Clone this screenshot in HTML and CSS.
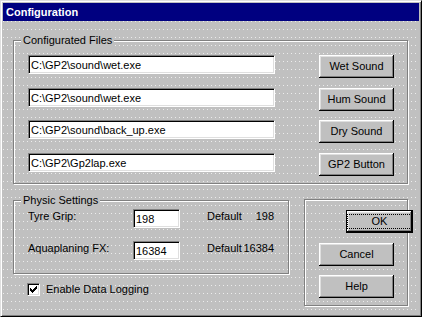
FILE: index.html
```html
<!DOCTYPE html>
<html lang="en">
<head>
  <meta charset="UTF-8">
  <title>Configuration</title>
  <link rel="stylesheet" href="styles.css">
</head>
<body>

  <div class="window">
    <div class="titlebar">Configuration</div>

    <div class="client">
      <div class="group files">
        <span class="group-label">Configurated Files</span>
        <div class="file-row">
          <div class="edit path">C:\GP2\sound\wet.exe</div>
          <button class="btn">Wet Sound</button>
        </div>
        <div class="file-row">
          <div class="edit path">C:\GP2\sound\wet.exe</div>
          <button class="btn">Hum Sound</button>
        </div>
        <div class="file-row">
          <div class="edit path">C:\GP2\sound\back_up.exe</div>
          <button class="btn">Dry Sound</button>
        </div>
        <div class="file-row">
          <div class="edit path">C:\GP2\Gp2lap.exe</div>
          <button class="btn">GP2 Button</button>
        </div>
      </div>

      <div class="lower">
        <div class="left-col">
          <div class="group physics">
            <span class="group-label">Physic Settings</span>
            <div class="phys-row">
              <span class="phys-label">Tyre Grip:</span>
              <div class="edit num">198</div>
              <span class="default"><span>Default</span><span>198</span></span>
            </div>
            <div class="phys-row">
              <span class="phys-label">Aquaplaning FX:</span>
              <div class="edit num">16384</div>
              <span class="default"><span>Default</span><span>16384</span></span>
            </div>
          </div>

          <div class="check">
            <span class="checkbox">
              <svg width="7" height="7" viewBox="0 0 7 7" shape-rendering="crispEdges">
                <path d="M6 0h1v1h-1z M5 1h2v1h-2z M0 2h1v1h-1z M4 2h3v1h-3z M0 3h2v1h-2z M3 3h3v1h-3z M0 4h5v1h-5z M1 5h3v1h-3z M2 6h1v1h-1z" fill="#000"/>
              </svg>
            </span>
            <span>Enable Data Logging</span>
          </div>
        </div>

        <div class="group actions">
          <button class="btn default"><span class="focus">OK</span></button>
          <button class="btn">Cancel</button>
          <button class="btn">Help</button>
        </div>
      </div>
    </div>
  </div>

</body>
</html>
```

FILE: styles.css
```css
* {
  box-sizing: border-box;
  margin: 0;
  padding: 0;
}

body {
  font-family: "Liberation Sans", Arial, sans-serif;
  font-size: 11px;
  line-height: 13px;
  color: #000;
  background: #c0c0c0;
}

.window {
  width: 422px;
  height: 317px;
  display: flex;
  flex-direction: column;
  padding: 2px;
  background: #c0c0c0;
  border: 1px solid;
  border-color: #dfdfdf #000 #000 #dfdfdf;
  box-shadow: inset 1px 1px #fff, inset -1px -1px #808080;
}

.titlebar {
  height: 18px;
  line-height: 18px;
  padding-left: 3px;
  background: #000080;
  color: #fff;
  font-weight: bold;
}

/* design-time grid dots */
.client {
  flex: 1;
  background:
    linear-gradient(90deg, transparent 1px, #c0c0c0 1px) 0 0 / 4px 8px,
    linear-gradient(transparent 1px, #c0c0c0 1px) 0 0 / 4px 8px,
    #ececec;
}

.group {
  position: relative;
  border: 1px solid #808080;
  box-shadow: inset 1px 1px #fff, 1px 1px #fff;
}

.group-label {
  position: absolute;
  top: -7px;
  left: 7px;
  padding: 0 2px;
  background: #c0c0c0;
  white-space: nowrap;
}

.files {
  width: 395px;
  height: 144px;
  margin: 19px 0 0 10px;
  padding: 14px 0 0 14px;
}

.file-row {
  display: flex;
  align-items: flex-start;
  gap: 44px;
  height: 32.67px;
}

.edit {
  height: 19px;
  padding: 3px 2px 0;
  background: #fff;
  border: 1px solid;
  border-color: #808080 #fff #fff #808080;
  box-shadow: inset 1px 1px #000, inset -1px -1px #dfdfdf;
  white-space: nowrap;
  overflow: hidden;
}

.path {
  width: 247px;
}

.num {
  width: 47px;
}

.btn {
  width: 75px;
  height: 23px;
  display: flex;
  align-items: center;
  justify-content: center;
  font: inherit;
  color: #000;
  background: #c0c0c0;
  border: none;
  box-shadow: inset -1px -1px #000, inset 1px 1px #fff, inset -2px -2px #808080, inset 2px 2px #dfdfdf;
}

.btn.default {
  border: 1px solid #000;
}

.focus {
  width: 65px;
  height: 15px;
  display: flex;
  align-items: center;
  justify-content: center;
  border: 1px dotted #000;
}

.lower {
  display: flex;
  gap: 15px;
  margin-left: 10px;
}

.left-col {
  width: 276px;
}

.physics {
  height: 74px;
  margin-top: 16px;
  padding: 8px 0 0 14px;
}

.phys-row {
  display: grid;
  grid-template-columns: 105px 47px 67px;
  align-items: start;
  height: 32px;
}

.phys-label {
  margin-top: 1px;
  white-space: nowrap;
}

.default {
  display: flex;
  justify-content: space-between;
  margin: 1px 0 0 27px;
  width: 67px;
  white-space: nowrap;
}

.check {
  display: flex;
  align-items: flex-start;
  gap: 6px;
  margin: 9px 0 0 14px;
}

.checkbox {
  width: 13px;
  height: 13px;
  display: flex;
  align-items: center;
  justify-content: center;
  background: #fff;
  border: 1px solid;
  border-color: #808080 #fff #fff #808080;
  box-shadow: inset 1px 1px #000, inset -1px -1px #dfdfdf;
}

.actions {
  width: 104px;
  height: 107px;
  margin-top: 15px;
  padding: 9px 0 0 14px;
  display: flex;
  flex-direction: column;
  gap: 9.5px;
}
```
